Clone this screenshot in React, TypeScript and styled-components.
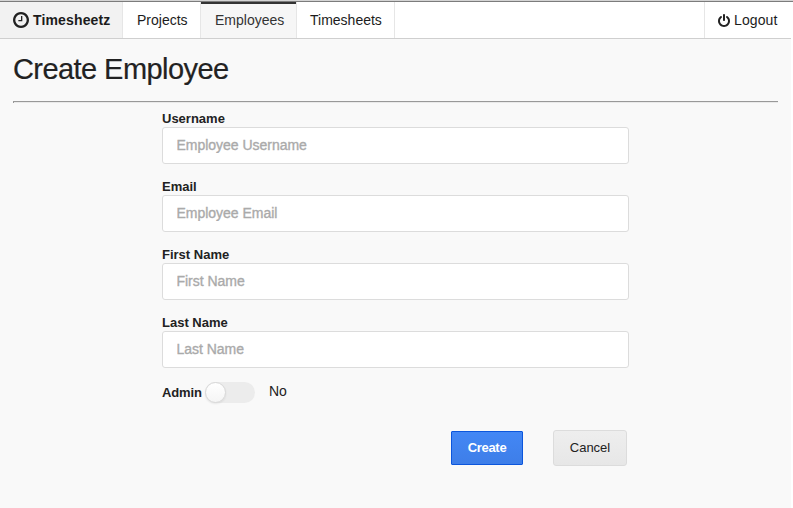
import React, { useState } from "react";
import styled, { createGlobalStyle } from "styled-components";

const GlobalStyle = createGlobalStyle`
  *, *::before, *::after { box-sizing: border-box; }
  html, body { margin: 0; background: #fff; }
  body { font-family: "Liberation Sans", Arial, sans-serif; font-size: 14px; color: #222; overflow: hidden; }
`;

const Page = styled.div`
  width: 791px;
  height: 508px;
  background: #f9f9f9;
`;

const WindowEdge = styled.div`
  width: 793px;
  height: 2px;
  background: linear-gradient(#d4d4d4 50%, #7c7c7c 50%);
`;

const Menu = styled.nav`
  display: flex;
  height: 37px;
  background: #fff;
  border-bottom: 1px solid #cfcfcf;
`;

const MenuItem = styled.a<{ $width: number; $inset?: number; $active?: boolean; $brand?: boolean; $right?: boolean }>`
  display: flex;
  align-items: center;
  width: ${(p) => p.$width}px;
  padding: 0 0 0 ${(p) => p.$inset ?? 13}px;
  margin-left: ${(p) => (p.$right ? "auto" : "0")};
  border-right: ${(p) => (p.$right ? "0" : "1px solid #e6e6e6")};
  border-left: ${(p) => (p.$right ? "1px solid #e6e6e6" : "0")};
  background: ${(p) => (p.$brand ? "#f2f2f2" : p.$active ? "#f6f6f6" : "transparent")};
  box-shadow: ${(p) => (p.$active ? "inset 0 2px 0 #333" : "none")};
  font-weight: ${(p) => (p.$brand ? 700 : 400)};
  color: ${(p) => (p.$active ? "#333" : "#1c1c1c")};
  white-space: nowrap;
  text-decoration: none;
`;

const MenuLabel = styled.span<{ $spacing?: number }>`
  letter-spacing: ${(p) => p.$spacing ?? 0}px;
`;

const Icon = styled.svg<{ $w: number; $h: number; $gap: number }>`
  width: ${(p) => p.$w}px;
  height: ${(p) => p.$h}px;
  margin-right: ${(p) => p.$gap}px;
  fill: #222;
  flex: none;
`;

const Main = styled.main`
  padding: 0 13px;
`;

const Title = styled.h1`
  margin: 0;
  height: 62px;
  padding-top: 13px;
  font-size: 29px;
  letter-spacing: -0.57px;
  line-height: 34px;
  font-weight: 400;
  -webkit-text-stroke: 0.2px #222;
`;

const Divider = styled.div`
  height: 2px;
  border-left: 1px solid #999;
  background: linear-gradient(#999 50%, #eaeaea 50%);
`;

const Form = styled.form`
  width: 467px;
  margin: 7px 0 0 149px;
`;

const Field = styled.div`
  height: 68px;
`;

const Label = styled.label`
  display: block;
  height: 17px;
  line-height: 17px;
  font-size: 13px;
  font-weight: 700;
`;

const AdminLabel = styled(Label)`
  width: 40px;
  letter-spacing: -0.15px;
`;

const Input = styled.input`
  display: block;
  width: 100%;
  height: 37px;
  padding: 0 14px 2px 13.5px;
  border: 1px solid #dcdcdc;
  border-radius: 3px;
  background: #fff;
  font: 14px "Liberation Sans", Arial, sans-serif;
  color: #222;
  outline: none;
  &::placeholder { color: #aaa; opacity: 1; letter-spacing: -0.02px; -webkit-text-stroke: 0.35px #aaa; }
`;

const AdminRow = styled.div`
  display: flex;
  align-items: center;
  height: 20px;
`;

const Toggle = styled.button`
  width: 50px;
  height: 21px;
  margin: 0 14px 0 3px;
  padding: 0;
  border: 0;
  border-radius: 11px;
  background: #ececec;
`;

const Knob = styled.span<{ $on: boolean }>`
  display: block;
  width: 21px;
  height: 21px;
  margin-left: ${(p) => (p.$on ? 29 : 0)}px;
  border-radius: 50%;
  background: linear-gradient(#fff, #f5f5f5);
  border: 1px solid #d8d8d8;
  box-shadow: 0 1px 2px rgba(0, 0, 0, 0.08);
`;

const ToggleValue = styled.span`
  line-height: 18px;
  margin-bottom: 2px;
`;

const Actions = styled.div`
  display: flex;
  align-items: center;
  justify-content: flex-end;
  gap: 30px;
  margin: 28px 2px 0 0;
`;

const Button = styled.button<{ $primary?: boolean }>`
  width: ${(p) => (p.$primary ? 72 : 74)}px;
  height: ${(p) => (p.$primary ? 34 : 36)}px;
  padding: 0 0 2px;
  border: 1px solid ${(p) => (p.$primary ? "#0c56dc" : "#dcdcdc")};
  border-radius: ${(p) => (p.$primary ? 1 : 3)}px;
  background: ${(p) => (p.$primary ? "linear-gradient(#4387f5, #3e7ee8)" : "linear-gradient(#eee, #e7e7e7)")};
  color: ${(p) => (p.$primary ? "#fff" : "#222")};
  font: ${(p) => (p.$primary ? 700 : 400)} 13px "Liberation Sans", Arial, sans-serif;
  letter-spacing: ${(p) => (p.$primary ? -0.3 : 0)}px;
`;

const ClockIcon = () => (
  <Icon viewBox="0 128 1536 1536" $w={16} $h={16} $gap={4}>
    <path d="M896 544v448q0 14-9 23t-23 9h-320q-14 0-23-9t-9-23v-64q0-14 9-23t23-9h224v-352q0-14 9-23t23-9h64q14 0 23 9t9 23zm416 352q0-148-73-273t-198-198-273-73-273 73-198 198-73 273 73 273 198 198 273 73 273-73 198-198 73-273zm224 0q0 209-103 385.5t-279.5 279.5-385.5 103-385.5-103-279.5-279.5-103-385.5 103-385.5 279.5-279.5 385.5-103 385.5 103 279.5 279.5 103 385.5z" />
  </Icon>
);

const PowerIcon = () => (
  <Icon viewBox="128 0 1536 1664" $w={12} $h={13} $gap={4}>
    <path d="M1664 896q0 156-61 298t-164 245-245 164-298 61-298-61-245-164-164-245-61-298q0-182 80.5-343t226.5-270q43-32 95.5-25t83.5 50q32 42 24.5 94.5t-49.5 84.5q-98 74-151.5 181t-53.5 228q0 104 40.5 198.5t109.5 163.5 163.5 109.5 198.5 40.5 198.5-40.5 163.5-109.5 109.5-163.5 40.5-198.5q0-121-53.5-228t-151.5-181q-42-32-49.5-84.5t24.5-94.5q31-43 84-50t95 25q146 109 226.5 270t80.5 343zm-640-768v640q0 52-38 90t-90 38-90-38-38-90v-640q0-52 38-90t90-38 90 38 38 90z" />
  </Icon>
);

const fields = [
  { id: "username", label: "Username", placeholder: "Employee Username" },
  { id: "email", label: "Email", placeholder: "Employee Email" },
  { id: "first", label: "First Name", placeholder: "First Name" },
  { id: "last", label: "Last Name", placeholder: "Last Name" },
];

export default function App() {
  const [admin, setAdmin] = useState(false);
  return (
    <>
      <GlobalStyle />
      <Page>
        <WindowEdge />
        <Menu>
          <MenuItem $width={123} $brand>
            <ClockIcon />
            <MenuLabel $spacing={0.15}>Timesheetz</MenuLabel>
          </MenuItem>
          <MenuItem $width={78} $inset={14}><MenuLabel>Projects</MenuLabel></MenuItem>
          <MenuItem $width={96} $inset={14} $active><MenuLabel>Employees</MenuLabel></MenuItem>
          <MenuItem $width={98}><MenuLabel>Timesheets</MenuLabel></MenuItem>
          <MenuItem $width={87} $right>
            <PowerIcon />
            <MenuLabel $spacing={0.1}>Logout</MenuLabel>
          </MenuItem>
        </Menu>
        <Main>
          <Title>Create Employee</Title>
          <Divider />
          <Form onSubmit={(e) => e.preventDefault()}>
            {fields.map((f) => (
              <Field key={f.id}>
                <Label htmlFor={f.id}>{f.label}</Label>
                <Input id={f.id} placeholder={f.placeholder} />
              </Field>
            ))}
            <AdminRow>
              <AdminLabel as="span">Admin</AdminLabel>
              <Toggle type="button" role="switch" aria-checked={admin} aria-label="Admin" onClick={() => setAdmin(!admin)}>
                <Knob $on={admin} />
              </Toggle>
              <ToggleValue>{admin ? "Yes" : "No"}</ToggleValue>
            </AdminRow>
            <Actions>
              <Button type="submit" $primary>Create</Button>
              <Button type="button">Cancel</Button>
            </Actions>
          </Form>
        </Main>
      </Page>
    </>
  );
}
